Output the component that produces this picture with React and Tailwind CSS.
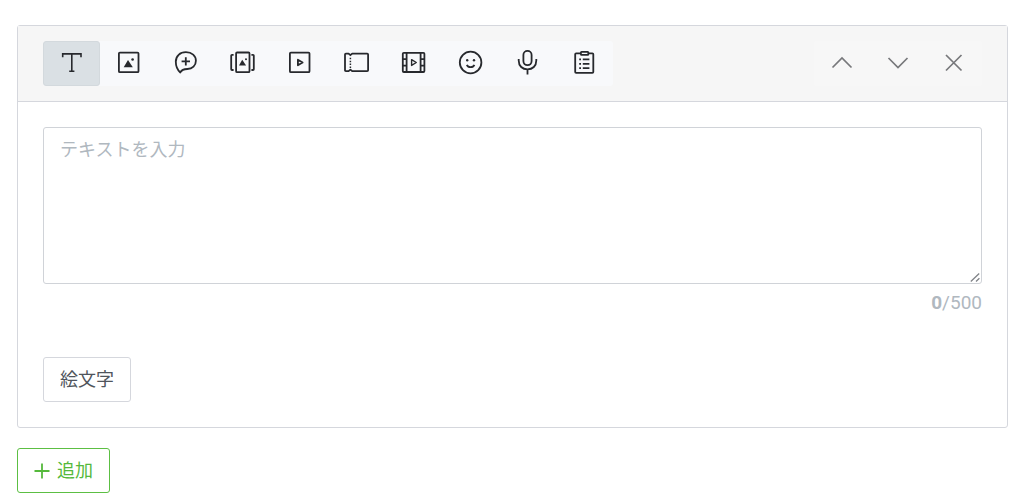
import { useState } from 'react';
import clsx from 'clsx';

const MAX = 500;

const Icon = ({ children }) => (
  <svg
    className="w-[27px] h-[27px] overflow-visible"
    viewBox="0 0 27 27"
    fill="none"
    stroke="currentColor"
    strokeWidth="1.8"
    strokeLinejoin="round"
    aria-hidden="true"
  >
    {children}
  </svg>
);

const types = [
  {
    id: 'text',
    label: 'テキスト',
    icon: (
      <Icon>
        <path d="M4.7 7.2V3.9H23V7.2M13.8 3.9V21.2M11.2 21.2H16.4" strokeLinejoin="miter" strokeWidth="1.6" />
      </Icon>
    ),
  },
  {
    id: 'image',
    label: '写真',
    icon: (
      <Icon>
        <rect x="3.9" y="2.6" width="19.6" height="19.6" rx="1" />
        <path d="M8.7 17.2L13 10L17.8 17.2Z" fill="currentColor" stroke="none" />
        <circle cx="17.6" cy="9.5" r="1.3" fill="currentColor" stroke="none" />
      </Icon>
    ),
  },
  {
    id: 'coupon',
    label: 'クーポン',
    icon: (
      <Icon>
        <path d="M8.3 22.5C5.3 19.8 3.8 16 3.8 11.8C3.8 6 8 2.2 13.9 2.2C20 2.2 23.9 5.9 23.9 10.8C23.9 15.6 20.4 19 15.4 19C12.2 19 9.8 19.2 8.3 22.5Z" />
        <path d="M13.8 7.2V15.6M9.6 11.4H18" />
      </Icon>
    ),
  },
  {
    id: 'rich',
    label: 'リッチメッセージ',
    icon: (
      <Icon>
        <rect x="7.1" y="2.5" width="13.4" height="19.7" rx="1" />
        <path d="M4.6 4.8H3Q2.2 4.8 2.2 5.6V19.2Q2.2 20 3 20H4.6M22.4 4.8H24Q24.8 4.8 24.8 5.6V19.2Q24.8 20 24 20H22.4" />
        <path d="M10 15.4L13.2 9.7L17.1 15.4Z" fill="currentColor" stroke="none" />
        <circle cx="17" cy="9.3" r="1" fill="currentColor" stroke="none" />
      </Icon>
    ),
  },
  {
    id: 'richvideo',
    label: 'リッチビデオ',
    icon: (
      <Icon>
        <rect x="3.9" y="2.6" width="19.6" height="19.6" rx="1" />
        <path d="M11.9 9.7L16.6 12.5L11.9 15.3Z" />
      </Icon>
    ),
  },
  {
    id: 'ticket',
    label: 'カード',
    icon: (
      <Icon>
        <path d="M2.9 3.6H5.6L7.4 5.2L9.2 3.6H24.2Q25.1 3.6 25.1 4.5V20.3Q25.1 21.2 24.2 21.2H9.2L7.4 19.6L5.6 21.2H2.9Q2 21.2 2 20.3V4.5Q2 3.6 2.9 3.6Z" />
        <path d="M7.4 7.8V18" strokeWidth="1.5" strokeDasharray="1.5 1.4" />
      </Icon>
    ),
  },
  {
    id: 'video',
    label: '動画',
    icon: (
      <Icon>
        <rect x="2.8" y="2.8" width="21.6" height="19.2" rx="1" />
        <path d="M6.6 2.8V22M20.6 2.8V22M2.8 9.1H6.6M2.8 15.6H6.6M20.6 9.1H24.4M20.6 15.6H24.4" />
        <path d="M11.6 9.6L16.3 12.5L11.6 15.4Z" strokeWidth="1.4" />
      </Icon>
    ),
  },
  {
    id: 'sticker',
    label: 'スタンプ',
    icon: (
      <Icon>
        <circle cx="13.6" cy="12.5" r="10.8" />
        <path d="M9.8 14.8C11.2 17.9 16 17.9 17.4 14.8" />
        <circle cx="10.2" cy="10.3" r="1.2" fill="currentColor" stroke="none" />
        <circle cx="17" cy="10.3" r="1.2" fill="currentColor" stroke="none" />
      </Icon>
    ),
  },
  {
    id: 'voice',
    label: 'ボイス',
    icon: (
      <Icon>
        <rect x="9.4" y="0.9" width="8.2" height="14.3" rx="4.1" />
        <path d="M4.7 9V10.4C4.7 16 8.4 19.4 13.5 19.4S22.3 16 22.3 10.4V9M13.5 19.4V24.4" />
      </Icon>
    ),
  },
  {
    id: 'survey',
    label: 'リサーチ',
    icon: (
      <Icon>
        <path d="M9.8 3.4H5.1Q4.2 3.4 4.2 4.3V21.9Q4.2 22.8 5.1 22.8H21.4Q22.3 22.8 22.3 21.9V4.3Q22.3 3.4 21.4 3.4H17.4" />
        <rect x="9.9" y="1.9" width="7.4" height="3" rx="0.6" />
        <path d="M8.2 9.4H10M11.8 9.4H18.4M8.2 13.8H10M11.8 13.8H18.4M8.2 18.2H10M11.8 18.2H18.4" />
      </Icon>
    ),
  },
];

const actions = [
  { label: '上へ移動', path: 'M4.5 17.5L14 8L23.5 17.5' },
  { label: '下へ移動', path: 'M4.5 8L14 17.5L23.5 8' },
  { label: '削除', path: 'M6 5L21.5 20.5M21.5 5L6 20.5' },
];

export default function App() {
  const [type, setType] = useState('text');
  const [text, setText] = useState('');

  return (
    <main className="pt-[25px] pl-[17px] pr-4 pb-2 bg-white text-lg font-['Roboto','Noto_Sans_CJK_JP',sans-serif]">
      <section className="border border-[#d5d7dd] rounded-[3px]">
        <header className="flex justify-between bg-[#f6f6f6] border-b border-[#d5d7dd] px-[25px] py-[15px]">
          <div className="flex rounded-[3px] bg-[#f8f9fb] text-[#27292d]">
            {types.map((t) => (
              <button
                key={t.id}
                type="button"
                aria-label={t.label}
                aria-pressed={type === t.id}
                onClick={() => setType(t.id)}
                className={clsx(
                  'flex items-center justify-center w-[57px] h-[45px] rounded-[3px]',
                  type === t.id && 'bg-[#dae0e4] border border-[#d3d9dd]'
                )}
              >
                {t.icon}
              </button>
            ))}
          </div>

          <div className="flex rounded-[3px] bg-[#f7f7f7] text-[#77787b]">
            {actions.map((a) => (
              <button
                key={a.label}
                type="button"
                aria-label={a.label}
                className="flex items-center justify-center w-14 h-[45px]"
              >
                <svg className="w-7 h-[27px]" viewBox="0 0 28 27" fill="none" stroke="currentColor" strokeWidth="1.7" aria-hidden="true">
                  <path d={a.path} />
                </svg>
              </button>
            ))}
          </div>
        </header>

        <div className="p-[25px]">
          <div className="relative">
            <textarea
              aria-label="テキスト"
              placeholder="テキストを入力"
              maxLength={MAX}
              value={text}
              onChange={(e) => setText(e.target.value)}
              className="block w-full h-[157px] resize-y [&::-webkit-resizer]:bg-transparent border border-[#d0d3d8] rounded-[3px] px-4 py-2 leading-7 text-[#45494f] placeholder:text-[#b0b8bf] focus:outline-none"
            />
            {/* resize grip */}
            <svg
              className="absolute right-0.5 bottom-0.5 w-2.5 h-2.5 pointer-events-none"
              viewBox="0 0 10 10"
              fill="none"
              stroke="#808388"
              strokeWidth="1.3"
              aria-hidden="true"
            >
              <path d="M0.8 9.5L9.2 1.5M6 9.5L9.4 6.2" />
            </svg>
          </div>
          <p className="mt-[7px] text-right text-[19px] leading-6 text-[#b0b8bf]">
            <b>{text.length}</b>/{MAX}
          </p>
          <button
            type="button"
            className="mt-[42px] h-[45px] px-4 flex items-center border border-[#d5d7dd] rounded-[3px] text-[#50555c]"
          >
            絵文字
          </button>
        </div>
      </section>

      <button
        type="button"
        className="mt-5 h-[45px] px-4 flex items-center gap-[7px] border border-[#5cbf43] rounded-[3px] text-[#55b93c]"
      >
        <svg className="w-4 h-4" viewBox="0 0 16 16" fill="none" stroke="currentColor" strokeWidth="1.8" aria-hidden="true">
          <path d="M8 0.5V15.5M0.5 8H15.5" />
        </svg>
        追加
      </button>
    </main>
  );
}
